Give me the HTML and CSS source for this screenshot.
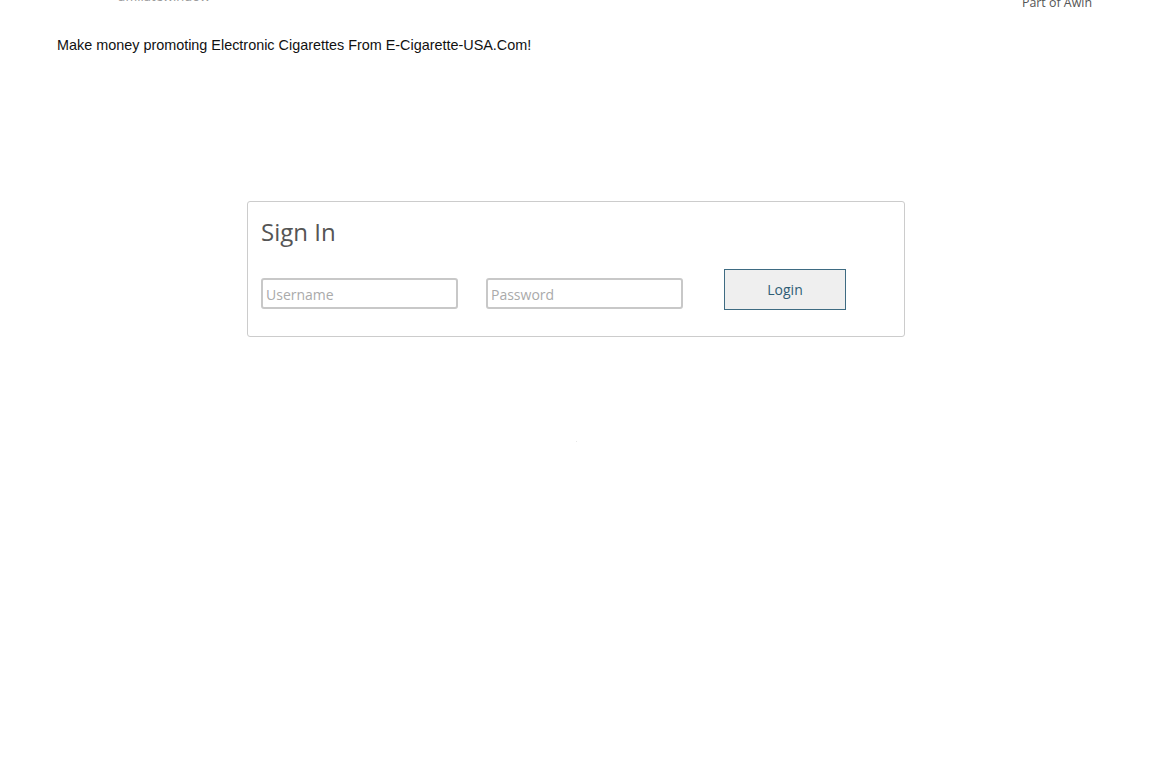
FILE: index.html
```html
<!DOCTYPE html>
<html>
<head>
<meta charset="utf-8">
<link rel="stylesheet" href="styles.css">
</head>
<body>
<div class="header">
  <div class="logo">affiliatewindow</div>
  <div class="awin">Part of Awin</div>
</div>
<p class="intro">Make money promoting Electronic Cigarettes From E-Cigarette-USA.Com!</p>
<div class="signin">
  <h2 class="title">Sign In</h2>
  <form class="row">
    <input class="field" type="text" placeholder="Username">
    <input class="field pw" type="password" placeholder="Password">
    <button class="login" type="button">Login</button>
  </form>
</div>
<div class="dot"></div>
</body>
</html>
```
FILE: styles.css
```css
html, body { margin: 0; padding: 0; background: #fff; }
body { font-family: "Liberation Sans", Arial, sans-serif; }
.header {
  display: flex;
  justify-content: space-between;
  align-items: flex-end;
  height: 10px;
  padding: 0 60px 0 118px;
  overflow: hidden;
}
.logo {
  font-family: "Open Sans", sans-serif;
  font-size: 13px;
  color: #999;
  line-height: 14px;
  margin-bottom: 7px;
}
.awin {
  font-family: "Open Sans", sans-serif;
  font-size: 12.4px;
  line-height: 14px;
  color: #555;
}
.intro {
  margin: 27px 0 0 57px;
  font-size: 14.4px;
  line-height: 17px;
  color: #111;
}
.signin {
  width: 658px;
  margin: 147px auto 0;
  border: 1px solid #ccc;
  border-radius: 3px;
  padding: 0 13px 26px;
  box-sizing: border-box;
}
.title {
  margin: 14px 0 0;
  font-family: "Open Sans", sans-serif;
  font-weight: 400;
  font-size: 24px;
  line-height: 32px;
  color: #555;
}
.row {
  display: flex;
  align-items: flex-end;
  margin: 21px 0 0;
}
.field {
  width: 197px;
  height: 31px;
  box-sizing: border-box;
  border: 2px solid #c8c8c8;
  border-radius: 3px;
  padding: 2px 3px 0;
  font-family: "Open Sans", sans-serif;
  font-size: 14px;
  color: #333;
  margin: 0 0 1px 0;
}
.field::placeholder { color: #aaa; }
.pw { margin-left: 28px; }
.login {
  width: 122px;
  height: 41px;
  margin-left: 41px;
  background: #efefef;
  border: 1px solid #3e6b82;
  font-family: "Open Sans", sans-serif;
  font-size: 14px;
  color: #2e5d75;
  padding: 0;
}
.dot {
  width: 1px;
  height: 1px;
  background: #e8e8e8;
  margin: 104px auto 0;
}
```
